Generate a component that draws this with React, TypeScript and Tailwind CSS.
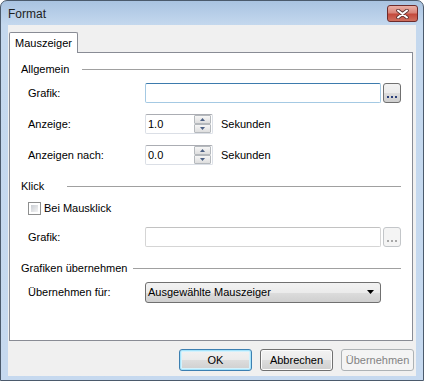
import React from 'react'

const btnFace =
  'bg-[linear-gradient(to_bottom,#f2f2f2_0%,#ebebeb_50%,#dddddd_50%,#cfcfcf_100%)]'

function GroupHeader({ label, width }: { label: string; width: string }) {
  return (
    <div className="flex h-[14px] items-center pr-[11px]">
      <span className={`${width} shrink-0 whitespace-nowrap`}>{label}</span>
      <div className="h-px flex-1 bg-[#a0a0a0]" />
    </div>
  )
}

function Field({ label, children }: { label: string; children: React.ReactNode }) {
  return (
    <div className="flex h-[20px] items-center pl-[7px]">
      <span className="w-[117px] shrink-0 whitespace-nowrap">{label}</span>
      {children}
    </div>
  )
}

function BrowseButton({ disabled }: { disabled?: boolean }) {
  return (
    <div
      className={`ml-[2px] flex h-[20px] w-[18px] items-end justify-center rounded-[3px] border pb-[4px] ${
        disabled
          ? 'border-[#c3c6c9] bg-[#f4f4f4] text-[#a0a0a0]'
          : `border-[#707070] ${btnFace} text-[#1c2a5c]`
      }`}
    >
      <div className="flex gap-[2px]">
        <span className={`h-[2px] w-[2px] ${disabled ? 'bg-[#a8a8a8]' : 'bg-[#2b3f7a]'}`} />
        <span className={`h-[2px] w-[2px] ${disabled ? 'bg-[#a8a8a8]' : 'bg-[#2b3f7a]'}`} />
        <span className={`h-[2px] w-[2px] ${disabled ? 'bg-[#a8a8a8]' : 'bg-[#2b3f7a]'}`} />
      </div>
    </div>
  )
}

function Spin({ value }: { value: string }) {
  return (
    <div className="flex items-center">
      <div className="flex h-[20px] w-[68px] items-center justify-between rounded-[2px] border border-[#dbdfe6] border-t-[#abadb3] bg-white pl-[2px] pr-px">
        <span>{value}</span>
        <div className="flex flex-col gap-0">
          <div className="flex h-[9px] w-[17px] items-center justify-center rounded-[1px] border border-[#b5b9bd] bg-[linear-gradient(to_bottom,#f6f6f6,#dedede)]">
            <svg width="5" height="3" viewBox="0 0 5 3">
              <path d="M2.5 0 L5 3 L0 3 Z" fill="#4d6185" />
            </svg>
          </div>
          <div className="flex h-[9px] w-[17px] items-center justify-center rounded-[1px] border border-[#b5b9bd] bg-[linear-gradient(to_bottom,#f6f6f6,#dedede)]">
            <svg width="5" height="3" viewBox="0 0 5 3">
              <path d="M0 0 L5 0 L2.5 3 Z" fill="#4d6185" />
            </svg>
          </div>
        </div>
      </div>
      <span className="ml-[8px]">Sekunden</span>
    </div>
  )
}

export default function App() {
  return (
    <div className="h-[381px] w-[424px] bg-white font-['Liberation_Sans',Arial,sans-serif] text-[11px] text-black">
      <div className="flex h-full flex-col rounded-t-[7px] border border-[#4b5a6c] bg-[linear-gradient(to_bottom,#a9c3e1_0px,#c4d8ee_24px,#c6d9ef_100%)]">
        {/* title bar */}
        <div className="flex h-[24px] items-start justify-between pl-[7px] pr-[5px]">
          <span className="mt-[4px] text-[12px] text-[#1e1e1e]">Format</span>
          <div className="mt-[4px] flex h-[17px] w-[31px] items-center justify-center rounded-[3px] border border-[#6d2b2b] bg-[linear-gradient(to_bottom,#eab0a6_0%,#d98478_45%,#c44a3c_55%,#d0705f_100%)]">
            <svg width="13" height="10" viewBox="0 0 13 10">
              <path d="M2 1.5 L11 8.5 M11 1.5 L2 8.5" stroke="#5a3030" strokeWidth="3.6" strokeLinecap="round" />
              <path d="M2 1.5 L11 8.5 M11 1.5 L2 8.5" stroke="#ffffff" strokeWidth="2" strokeLinecap="round" />
            </svg>
          </div>
        </div>

        {/* client area */}
        <div className="mx-[7px] mb-[4px] flex flex-1 flex-col bg-[#f0f0f0]">
          <div className="ml-[1px] mt-[7px] flex">
            <div className="relative z-10 -mb-px flex h-[21px] w-[69px] items-center justify-center rounded-t-[2px] border border-b-0 border-[#898c95] bg-white">
              Mauszeiger
            </div>
          </div>
          <div className="ml-[1px] flex h-[289px] w-[404px] flex-col border border-[#898c95] bg-white pl-[11px] pt-[9px]">
            <GroupHeader label="Allgemein" width="w-[61px]" />
            <div className="mt-[7px]">
              <Field label="Grafik:">
                <div className="h-[20px] w-[236px] rounded-[2px] border border-[#a4c9e3] border-t-[#3d7bad] bg-white" />
                <BrowseButton />
              </Field>
            </div>
            <div className="mt-[11px]">
              <Field label="Anzeige:">
                <Spin value="1.0" />
              </Field>
            </div>
            <div className="mt-[11px]">
              <Field label="Anzeigen nach:">
                <Spin value="0.0" />
              </Field>
            </div>

            <div className="mt-[14px]">
              <GroupHeader label="Klick" width="w-[46px]" />
            </div>
            <div className="mt-[8px] flex h-[14px] items-center pl-[7px]">
              <div className="h-[13px] w-[13px] border border-[#8e8f8f] bg-white p-[2px]">
                <div className="h-full w-full bg-[linear-gradient(135deg,#c9cdd3,#f4f4f4)]" />
              </div>
              <span className="ml-[3px]">Bei Mausklick</span>
            </div>
            <div className="mt-[12px]">
              <Field label="Grafik:">
                <div className="h-[20px] w-[236px] rounded-[2px] border border-[#d5d5d5] border-t-[#c2c2c2] bg-white" />
                <BrowseButton disabled />
              </Field>
            </div>

            <div className="mt-[14px]">
              <GroupHeader label="Grafiken übernehmen" width="w-[112px]" />
            </div>
            <div className="mt-[7px]">
              <Field label="Übernehmen für:">
                <div className={`flex h-[21px] w-[236px] items-center justify-between rounded-[3px] border border-[#707070] ${btnFace} pl-[2px] pr-[6px]`}>
                  <span>Ausgewählte Mauszeiger</span>
                  <svg width="7" height="4" viewBox="0 0 7 4">
                    <path d="M0 0 L7 0 L3.5 4 Z" fill="#000" />
                  </svg>
                </div>
              </Field>
            </div>
          </div>

          {/* buttons */}
          <div className="mr-[2px] mt-[8px] flex justify-end gap-[8px]">
            <div className={`flex h-[22px] w-[73px] items-center justify-center rounded-[3px] border border-[#3c7fb1] ${btnFace} shadow-[inset_0_0_0_1px_#a6e3fa,inset_0_0_0_2px_#d4f2fd]`}>
              OK
            </div>
            <div className={`flex h-[22px] w-[73px] items-center justify-center rounded-[3px] border border-[#707070] ${btnFace} shadow-[inset_0_0_0_1px_#fcfcfc]`}>
              Abbrechen
            </div>
            <div className="flex h-[22px] w-[73px] items-center justify-center rounded-[3px] border border-[#adb2b5] bg-[#f4f4f4] text-[#838383]">
              Übernehmen
            </div>
          </div>
        </div>
      </div>
    </div>
  )
}
